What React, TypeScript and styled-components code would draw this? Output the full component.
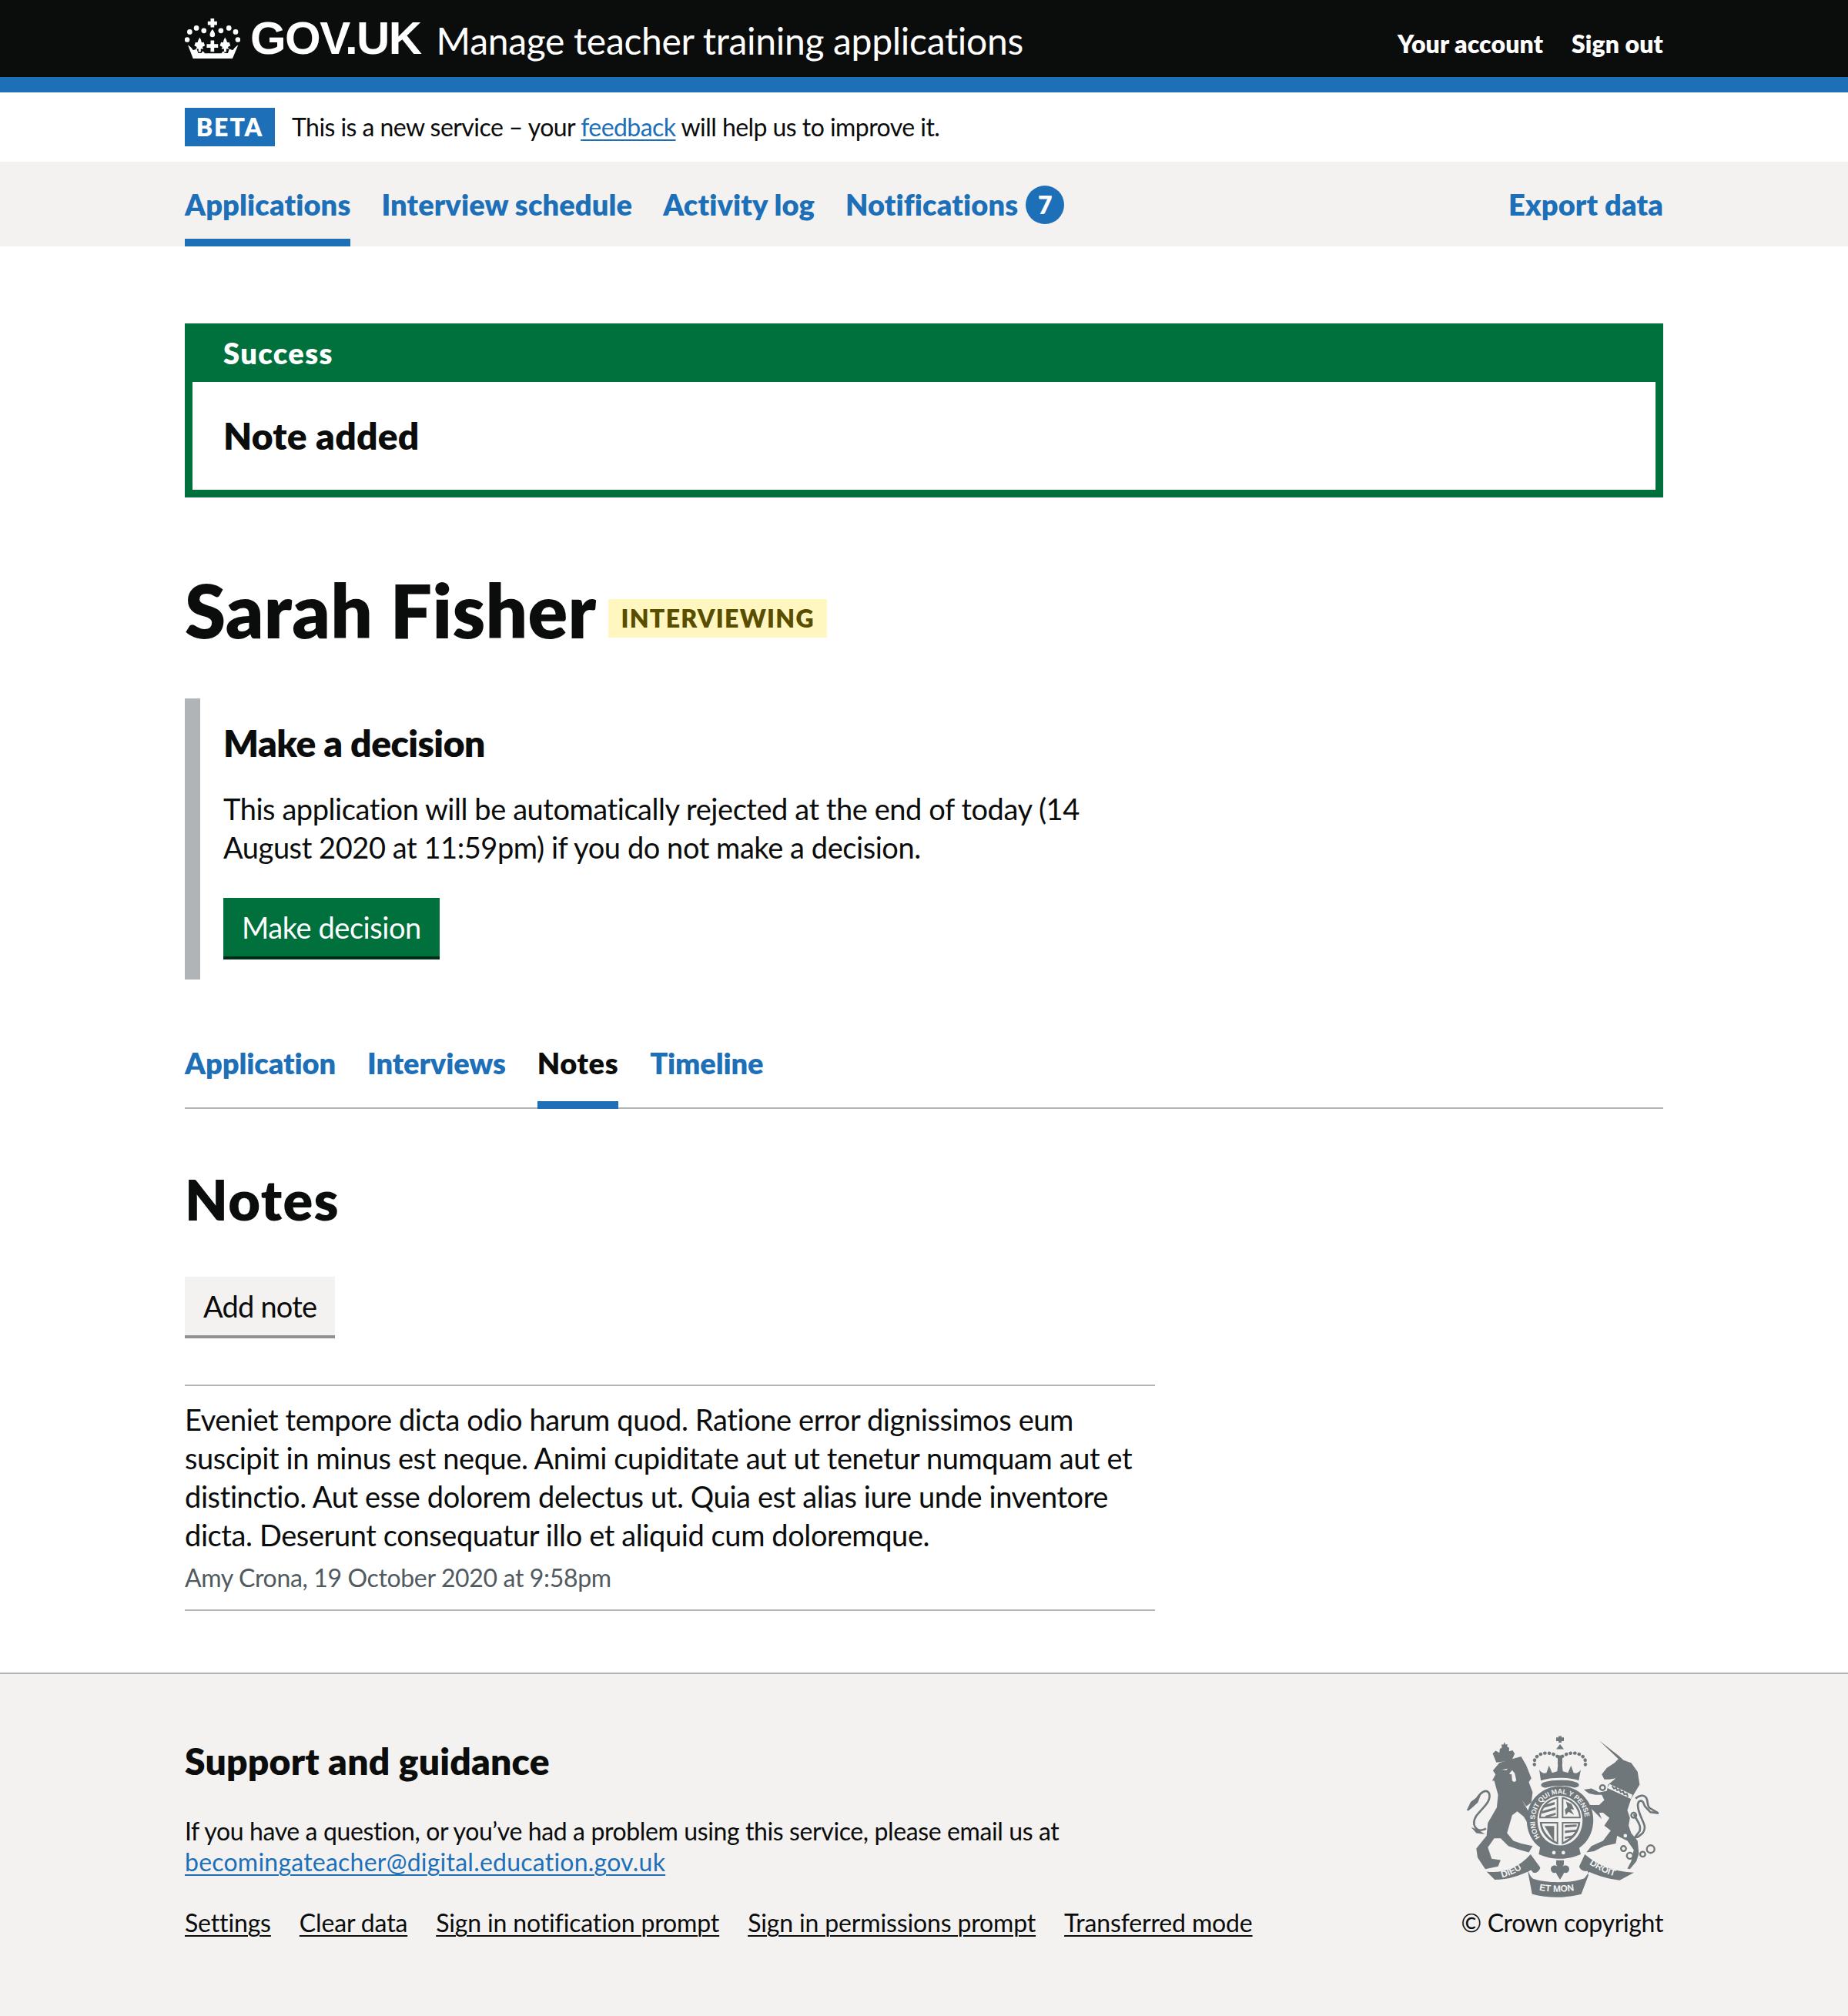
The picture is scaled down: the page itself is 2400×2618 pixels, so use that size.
import { createGlobalStyle, styled } from 'styled-components';

const GlobalStyle = createGlobalStyle`
  * { box-sizing: border-box; }
  body {
    margin: 0;
    background: #fff;
    color: #0b0c0c;
    font-family: Lato, "Liberation Sans", sans-serif;
    font-size: 38px;
    line-height: 50px;
    letter-spacing: -0.44px;
    font-variant-ligatures: none;
  }
`;

const Container = styled.div`
  width: 1920px;
  margin: 0 auto;
`;

const Header = styled.header`
  height: 120px;
  background: #0b0c0c;
  border-bottom: 20px solid #1d70b8;
  color: #fff;
`;

const HeaderRow = styled(Container)`
  display: flex;
  align-items: center;
  height: 100px;
`;

const Logotype = styled.span`
  margin-left: 13px;
  font-size: 60px;
  line-height: 60px;
  font-weight: 700;
  font-family: "Liberation Sans", sans-serif;
  letter-spacing: -1.6px;
`;

const ServiceName = styled.span`
  margin: 6px 0 0 20px;
  font-size: 48px;
  line-height: 60px;
  letter-spacing: -0.3px;
`;

const AccountLinks = styled.div`
  display: flex;
  gap: 37px;
  margin-left: auto;
  margin-top: 14px;
  font-size: 32px;
  font-weight: 800;
  letter-spacing: 0.1px;
`;

const BetaRow = styled(Container)`
  display: flex;
  align-items: center;
  gap: 22px;
  height: 90px;
  font-size: 32px;
  letter-spacing: -0.55px;
`;

const BetaTag = styled.strong`
  width: 117px;
  height: 50px;
  background: #1d70b8;
  color: #fff;
  text-align: center;
  font-weight: 800;
  line-height: 50px;
  letter-spacing: 2px;
`;

const TextLink = styled.a`
  color: #1d70b8;
  text-decoration: underline;
  text-decoration-thickness: 2px;
  text-underline-offset: 4px;
`;

const EmailLink = styled(TextLink)`
  letter-spacing: 0.23px;
`;

const NavBar = styled.nav`
  height: 110px;
  background: #f3f2f1;
`;

const NavRow = styled(Container)`
  display: flex;
  gap: 40px;
`;

const NavItem = styled.a<{ $active?: boolean; $push?: boolean }>`
  display: flex;
  align-items: center;
  height: 110px;
  padding-top: 9px;
  margin-left: ${(p) => (p.$push ? 'auto' : '0')};
  border-bottom: 10px solid ${(p) => (p.$active ? '#1d70b8' : 'transparent')};
  color: #1d70b8;
  font-weight: 800;
  letter-spacing: 0.12px;
`;

const Badge = styled.span`
  display: flex;
  align-items: center;
  justify-content: center;
  width: 50px;
  height: 50px;
  margin: 3px 0 0 10px;
  border-radius: 50%;
  background: #1d70b8;
  color: #fff;
  font-size: 32px;
`;

const SuccessBanner = styled.section`
  margin-top: 100px;
  border: 10px solid #00703c;
`;

const SuccessTitle = styled.div`
  height: 66px;
  padding: 4px 0 0 40px;
  background: #00703c;
  color: #fff;
  font-weight: 800;
  line-height: 48px;
  letter-spacing: 1.4px;
`;

const SuccessBody = styled.div`
  display: flex;
  align-items: center;
  height: 140px;
  padding-left: 40px;
  font-size: 48px;
  font-weight: 800;
  letter-spacing: 0.2px;
`;

const TitleRow = styled.div`
  display: flex;
  align-items: center;
  gap: 16px;
  margin-top: 96px;
  margin-bottom: 65px;
`;

const PageTitle = styled.h1`
  margin: 0;
  font-size: 96px;
  line-height: 100px;
  font-weight: 800;
  letter-spacing: 0.3px;
`;

const StatusTag = styled.strong`
  margin-top: 22px;
  padding: 0 16px;
  height: 50px;
  background: #fff7bf;
  color: #594d00;
  font-size: 32px;
  font-weight: 800;
  line-height: 50px;
  letter-spacing: 1.3px;
`;

const Inset = styled.section`
  width: 1260px;
  padding: 30px 50px 26px 30px;
  border-left: 20px solid #b1b4b6;
`;

const InsetHeading = styled.h2`
  margin: 0;
  font-size: 48px;
  line-height: 56px;
  font-weight: 800;
  letter-spacing: -0.55px;
`;

const InsetText = styled.p`
  margin: 32px 0 41px;
`;

const Button = styled.a<{ $secondary?: boolean }>`
  display: inline-block;
  height: 80px;
  padding: 0 24px;
  background: ${(p) => (p.$secondary ? '#f3f2f1' : '#00703c')};
  box-shadow: inset 0 -4px 0 ${(p) => (p.$secondary ? '#929191' : '#002d18')};
  color: ${(p) => (p.$secondary ? '#0b0c0c' : '#fff')};
  line-height: 76px;
  letter-spacing: ${(p) => (p.$secondary ? '-0.8px' : '-0.44px')};
`;

const Tabs = styled.div`
  display: flex;
  gap: 41px;
  height: 100px;
  margin-top: 68px;
  border-bottom: 2px solid #b1b4b6;
`;

const Tab = styled.a<{ $active?: boolean }>`
  height: 100px;
  border-bottom: 10px solid ${(p) => (p.$active ? '#1d70b8' : 'transparent')};
  color: ${(p) => (p.$active ? '#0b0c0c' : '#1d70b8')};
  font-weight: 800;
  line-height: 80px;
  letter-spacing: ${(p) => (p.$active ? '0.6px' : '-0.1px')};
`;

const SectionTitle = styled.h2`
  margin: 77px 0 61px;
  font-size: 72px;
  line-height: 80px;
  font-weight: 800;
  letter-spacing: 1.4px;
`;

const Note = styled.article`
  width: 1260px;
  margin-top: 60px;
  padding: 18px 0 21px;
  border-top: 2px solid #b1b4b6;
  border-bottom: 2px solid #b1b4b6;
`;

const NoteBody = styled.p`
  margin: 0;
  letter-spacing: -0.4px;
`;

const NoteMeta = styled.p`
  margin: 11px 0 0;
  color: #505a5f;
  font-size: 32px;
  line-height: 40px;
  letter-spacing: -0.35px;
`;

const Footer = styled.footer`
  height: 446px;
  margin-top: 80px;
  padding-top: 80px;
  background: #f3f2f1;
  border-top: 2px solid #b1b4b6;
`;

const FooterRow = styled(Container)`
  display: flex;
  justify-content: space-between;
`;

const FooterMain = styled.div`
  padding-top: 5px;
  font-size: 32px;
  line-height: 40px;
  letter-spacing: -0.39px;
`;

const FooterHeading = styled.h2`
  margin: 0 0 43px;
  font-size: 48px;
  line-height: 56px;
  font-weight: 800;
  letter-spacing: 0.2px;
`;

const FooterText = styled.p`
  margin: 0;
`;

const FooterLinks = styled.div`
  display: flex;
  gap: 37px;
  margin-top: 39px;
  letter-spacing: -0.15px;
`;

const FooterLink = styled.a`
  color: #0b0c0c;
  text-decoration: underline;
  text-decoration-thickness: 2px;
  text-underline-offset: 4px;
`;

const FooterCrest = styled.div`
  display: flex;
  flex-direction: column;
  align-items: flex-end;
  font-size: 32px;
  line-height: 40px;
  letter-spacing: -0.35px;
`;

const CrestImage = styled.svg`
  display: block;
  width: 250px;
  height: 214px;
  margin: 0 6px 9px 0;
`;

function CrownLogo() {
  return (
    <svg width="72" height="52" viewBox="60 5 215 155" fill="#fff" aria-hidden="true" style={{ flex: 'none' }}>
      <circle cx="69" cy="87" r="10" />
      <circle cx="79" cy="57" r="10" />
      <circle cx="105" cy="42" r="10" />
      <circle cx="134" cy="52" r="10" />
      <circle cx="200" cy="52" r="10" />
      <circle cx="231" cy="42" r="10" />
      <circle cx="257" cy="57" r="10" />
      <circle cx="266" cy="87" r="10" />
      <path d="M160 5h14v11h11v14h-11v9h-14v-9h-11V16h11zM167 47c7 9 10 15 10 21 0 6-4 9-10 9s-10-3-10-9c0-6 3-12 10-21z" />
      <path d="M117 78c5 7 7 11 7 16 0 3 5 6 9 2l5 14-10 5 4 8h-10v12h-9v-12H103l4-8-10-5 5-14c4 4 9 1 9-2 0-5 3-9 8-16zM217 78c-5 7-7 11-7 16 0 3-5 6-9 2l-5 14 10 5-4 8h10v12h9v-12h10l-4-8 10-5-5-14c-4 4-9 1-9-2 0-5-3-9-8-16zM160 90h14v14h15v14h-15v16h-14v-16h-15v-14h15z" />
      <path d="M72 108c8 5 15 11 20 19 5 0 10-1 14-5l6 17h12l6-8 8 9h64l7-9 6 8h12l6-17c4 4 9 5 14 5 5-8 12-14 20-19l-22 52H92z" />
    </svg>
  );
}

function RoyalCrest() {
  return (
    <CrestImage viewBox="160 100 752 642" aria-hidden="true">
      <g fill="#6f777b">
        {/* lion */}
        <path d="M265 235l25-30 50-15 35-10 20 35 20 50-10 15 15 40-5 40-20 15-17-25 52 90-10 20-20-20-15-25-25-20-20 15-20 70 25 30 30 10 45 10-15 25-35-10-45-15-30-30h-25l-25 35 15 45 35 5-10 25-50 10-30-45-5-35 40-50 5-50 35-60 5-50-15-55-8 0 13-25z" />
        <path d="M238 462c-38 20-60-14-38-50 26-34 60-56 50-88-12-18-32-4-46 18-14 24-22 36-38 48" fill="none" stroke="#6f777b" strokeWidth="8" />
        <path d="M162 392l16-34 24-18 18-16-14 36-24 22z" />
        <path d="M180 456l30 12 24 16-34-4z" />
        {/* lion crown */}
        <path d="M278 204l-14-36 12-10 14 8 2-16 8-4-2-12 8 0 4-10 4 10 8-2-2 10 8 4 0 14 14-4 8 14-12 26z" />
        {/* large crown */}
        <path d="M512 106h10l-2-5h14l-2 5h10v14h-10l2 6h-14l2-6h-10zM512 152l15-20 15 20z" />
        <path d="M446 232c8 12 18 16 28 12l10-28 12 28 20-6 4-36h14l4 36 20 6 12-28 10 28c10 4 20 0 28-12l-8 42c-44-14-104-14-148 0z" />
        <path d="M466 280c34-10 86-10 122 0 20 6 16 22-4 22-34-10-76-10-112 0-22 0-26-16-6-22z" />
        <rect x="518" y="176" width="18" height="36" />
        {/* garter */}
        <path fillRule="evenodd" d="M527 296c72 0 130 58 130 132 0 80-58 132-130 132s-130-52-130-132c0-74 58-132 130-132zm0 38c-50 0-88 40-88 94 0 60 40 100 88 100s88-40 88-100c0-54-38-94-88-94z" />
        <path d="M450 530c50 16 100 16 150 0l8 32c-56 24-110 24-164 0z" />
        {/* shield quarters */}
        <path fillRule="evenodd" d="M446 422c-2-42 28-76 74-84v84zm6-6h62v-70c-34 8-58 36-62 70z" />
        <path d="M460 372l46-14v10l-46 14zM456 394l54-16v10l-54 16zM470 412l40-12v8l-40 12z" />
        <path fillRule="evenodd" d="M534 338c46 8 76 42 74 84h-74zm6 78h62c-4-34-28-62-62-70z" />
        <path d="M550 356l22 10 10 22-14-2 14 22-22-12-10 14-4-22 10-10z" />
        <path fillRule="evenodd" d="M448 436h72v88c-40-12-70-46-72-88zm8 6c4 30 28 58 58 72v-72z" />
        <path d="M466 452l38 60V452z" />
        <path fillRule="evenodd" d="M534 436h72c-2 42-32 76-72 88zm6 6v72c30-14 54-42 58-72z" />
        <path d="M546 448l46-2v8l-46 4zM546 470l46-4v8l-46 6zM546 494l32-6v8l-32 6z" />
        {/* unicorn */}
        <path d="M680 118l77 60 18 17 30 10 25 35 8 50-18 30-15 25-15 45 10 30-5 30 10 30 25 30 5 50-10 30-25 30-10-2 15-28 10-45-25-35-40-20-5 30-45 10-40 20-30 5 20-25 45-20 30-40-25-20 20-30-25-20-15 0 10 25-40-40-10-15h40l20-20-10-20h-25l-25-5-20-15 30-5 30 15 30-5 5-25 30-25-25 5-20 0-10-20 20-25 30-20 15-15z" />
        <path d="M822 344c14-12 32-16 42-2 8 14 2 32 14 40l34 20-32-4-22-24c-6-10-4-22-18-20-14 4-10 30 0 54 10 30 28 46 10 72l-18 14-14 4 20-26c8-26-12-40-22-66" fill="none" stroke="#6f777b" strokeWidth="8" />
        {/* ribbons */}
        <path d="M240 630c62 8 124-14 172-68l38 52c-4 14-16 24-28 20l-8-10c-40 20-90 38-142 38z" />
        <path d="M400 620c4 14 12 30 22 38 54 18 146 18 200-2l20-26-8-8 4 22-28 74c-60 16-132 16-192 0l-14-74z" />
        <path d="M602 610l22-48c48 42 112 68 192 72l-56 30c-52-6-98-22-126-36-16 2-28-4-32-18z" />
        {/* fleur below shield */}
        <path d="M512 586h30v16l-5 8c10-8 26-4 26 10 0 12-12 18-20 14l-4 8-12 20-12-20-4-8c-8 4-20-2-20-14 0-14 16-18 26-10l-5-8z" />
      </g>
      <g fill="none" stroke="#6f777b" strokeWidth="7">
        <path d="M427 212c-8-40 50-60 90-32M626 212c8-40-50-60-90-32" strokeDasharray="1 16" strokeLinecap="round" strokeWidth="13" />
        <circle cx="693" cy="302" r="10" />
        <circle cx="682" cy="385" r="10" />
        <circle cx="815" cy="410" r="10" />
        <circle cx="775" cy="540" r="10" />
        <circle cx="800" cy="568" r="12" />
        <circle cx="850" cy="562" r="10" />
        <circle cx="881" cy="542" r="15" />
      </g>
      <g fill="#f3f2f1">
        <path d="M340 234l-12 14 10 2 2 24c6 8 14 6 16-2l-6-26z" />
        <path d="M300 232l22-4-4 6z" />
        <path d="M720 288l90 42-6 16-92-42z" />
        <circle cx="503" cy="556" r="7" />
        <circle cx="540" cy="556" r="7" />
        <circle cx="806" cy="456" r="7" />
        <circle cx="782" cy="490" r="7" />
      </g>
      <path d="M730 296l8 10 8-4 4 10 10-2 4 10 10-2 4 10 10-2 4 12" fill="none" stroke="#6f777b" strokeWidth="6" />
      <defs>
        <path id="garterRing" d="M452 500a98 106 0 1 1 150 0" />
        <path id="ribbonLeft" d="M296 655c42-10 78-28 110-58" />
        <path id="ribbonMiddle" d="M442 702c50 10 112 10 166-4" />
        <path id="ribbonRight" d="M636 597c38 28 82 48 132 58" />
      </defs>
      <g fill="#f3f2f1" fontFamily="Liberation Sans, sans-serif" fontWeight="700">
        <text fontSize="27"><textPath href="#garterRing" startOffset="1%">HONI SOIT QUI MAL Y PENSE</textPath></text>
        <text fontSize="36"><textPath href="#ribbonLeft" startOffset="4%">DIEU</textPath></text>
        <text fontSize="36"><textPath href="#ribbonMiddle" startOffset="2%">ET MON</textPath></text>
        <text fontSize="36"><textPath href="#ribbonRight" startOffset="4%">DROIT</textPath></text>
      </g>
    </CrestImage>
  );
}

export default function App() {
  return (
    <>
      <GlobalStyle />
      <Header>
        <HeaderRow>
          <CrownLogo />
          <Logotype>GOV.UK</Logotype>
          <ServiceName>Manage teacher training applications</ServiceName>
          <AccountLinks>
            <span>Your account</span>
            <span>Sign out</span>
          </AccountLinks>
        </HeaderRow>
      </Header>
      <BetaRow>
        <BetaTag>BETA</BetaTag>
        <span>
          This is a new service – your <TextLink>feedback</TextLink> will help us to improve it.
        </span>
      </BetaRow>
      <NavBar>
        <NavRow>
          <NavItem $active>Applications</NavItem>
          <NavItem>Interview schedule</NavItem>
          <NavItem>Activity log</NavItem>
          <NavItem>
            Notifications<Badge>7</Badge>
          </NavItem>
          <NavItem $push>Export data</NavItem>
        </NavRow>
      </NavBar>
      <Container>
        <SuccessBanner>
          <SuccessTitle>Success</SuccessTitle>
          <SuccessBody>Note added</SuccessBody>
        </SuccessBanner>
        <TitleRow>
          <PageTitle>Sarah Fisher</PageTitle>
          <StatusTag>INTERVIEWING</StatusTag>
        </TitleRow>
        <Inset>
          <InsetHeading>Make a decision</InsetHeading>
          <InsetText>
            This application will be automatically rejected at the end of today (14 August 2020 at 11:59pm) if you do
            not make a decision.
          </InsetText>
          <Button>Make decision</Button>
        </Inset>
        <Tabs>
          <Tab>Application</Tab>
          <Tab>Interviews</Tab>
          <Tab $active>Notes</Tab>
          <Tab>Timeline</Tab>
        </Tabs>
        <SectionTitle>Notes</SectionTitle>
        <Button $secondary>Add note</Button>
        <Note>
          <NoteBody>
            Eveniet tempore dicta odio harum quod. Ratione error dignissimos eum suscipit in minus est neque. Animi
            cupiditate aut ut tenetur numquam aut et distinctio. Aut esse dolorem delectus ut. Quia est alias iure unde
            inventore dicta. Deserunt consequatur illo et aliquid cum doloremque.
          </NoteBody>
          <NoteMeta>Amy Crona, 19 October 2020 at 9:58pm</NoteMeta>
        </Note>
      </Container>
      <Footer>
        <FooterRow>
          <FooterMain>
            <FooterHeading>Support and guidance</FooterHeading>
            <FooterText>If you have a question, or you’ve had a problem using this service, please email us at</FooterText>
            <EmailLink>becomingateacher@digital.education.gov.uk</EmailLink>
            <FooterLinks>
              <FooterLink>Settings</FooterLink>
              <FooterLink>Clear data</FooterLink>
              <FooterLink>Sign in notification prompt</FooterLink>
              <FooterLink>Sign in permissions prompt</FooterLink>
              <FooterLink>Transferred mode</FooterLink>
            </FooterLinks>
          </FooterMain>
          <FooterCrest>
            <RoyalCrest />
            <span>© Crown copyright</span>
          </FooterCrest>
        </FooterRow>
      </Footer>
    </>
  );
}
